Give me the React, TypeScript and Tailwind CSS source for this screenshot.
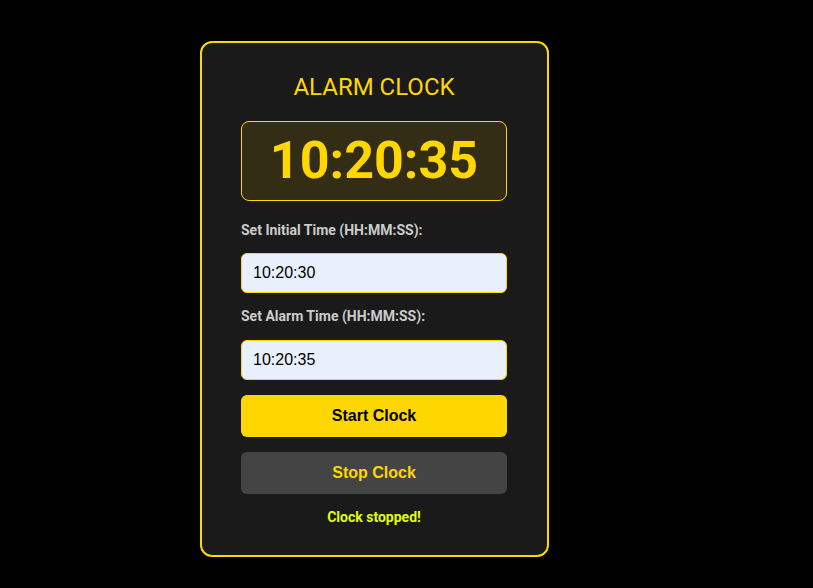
export default function App() {
  return (
    <div className="min-h-[588px] bg-black pt-[41px] pl-[200px]" style={{ fontFamily: "Roboto, sans-serif" }}>
      <div className="w-[349px] h-[516px] rounded-[12px] border-2 border-[#ffd700] bg-[#1a1a1a] pl-[39px] pr-[40px] pt-[30px]">
        <h1 className="text-center text-[24px] leading-[28px] text-[#ffd700]">ALARM CLOCK</h1>
        <div className="mt-[20px] h-[80px] rounded-[8px] border border-[#ffd700] bg-[#332d16] flex items-center justify-center">
          <span className="text-[52px] font-bold text-[#ffd700] leading-none">10:20:35</span>
        </div>
        <label className="block mt-[20px] text-[14px] font-bold text-[#cccccc] leading-[18px]">Set Initial Time (HH:MM:SS):</label>
        <input
          readOnly
          value="10:20:30"
          className="mt-[14px] block w-full h-[40px] rounded-[6px] border border-[#ffd700] bg-[#e8f0fe] px-[11px] text-[16px] text-black outline-none"
          style={{ fontFamily: '"Liberation Sans", Arial, sans-serif' }}
        />
        <label className="block mt-[14px] text-[14px] font-bold text-[#cccccc] leading-[18px]">Set Alarm Time (HH:MM:SS):</label>
        <input
          readOnly
          value="10:20:35"
          className="mt-[15px] block w-full h-[40px] rounded-[6px] border border-[#ffd700] bg-[#e8f0fe] px-[11px] text-[16px] text-black outline-none"
          style={{ fontFamily: '"Liberation Sans", Arial, sans-serif' }}
        />
        <button
          className="mt-[15px] block w-full h-[42px] rounded-[6px] bg-[#ffd700] text-[16px] font-bold text-black"
          style={{ fontFamily: '"Liberation Sans", Arial, sans-serif' }}
        >
          Start Clock
        </button>
        <button
          className="mt-[15px] block w-full h-[42px] rounded-[6px] bg-[#444444] text-[16px] font-bold text-[#ffd700]"
          style={{ fontFamily: '"Liberation Sans", Arial, sans-serif' }}
        >
          Stop Clock
        </button>
        <p className="mt-[14px] text-center text-[14px] font-bold text-[#e0ff00] leading-[18px]">Clock stopped!</p>
      </div>
    </div>
  );
}
